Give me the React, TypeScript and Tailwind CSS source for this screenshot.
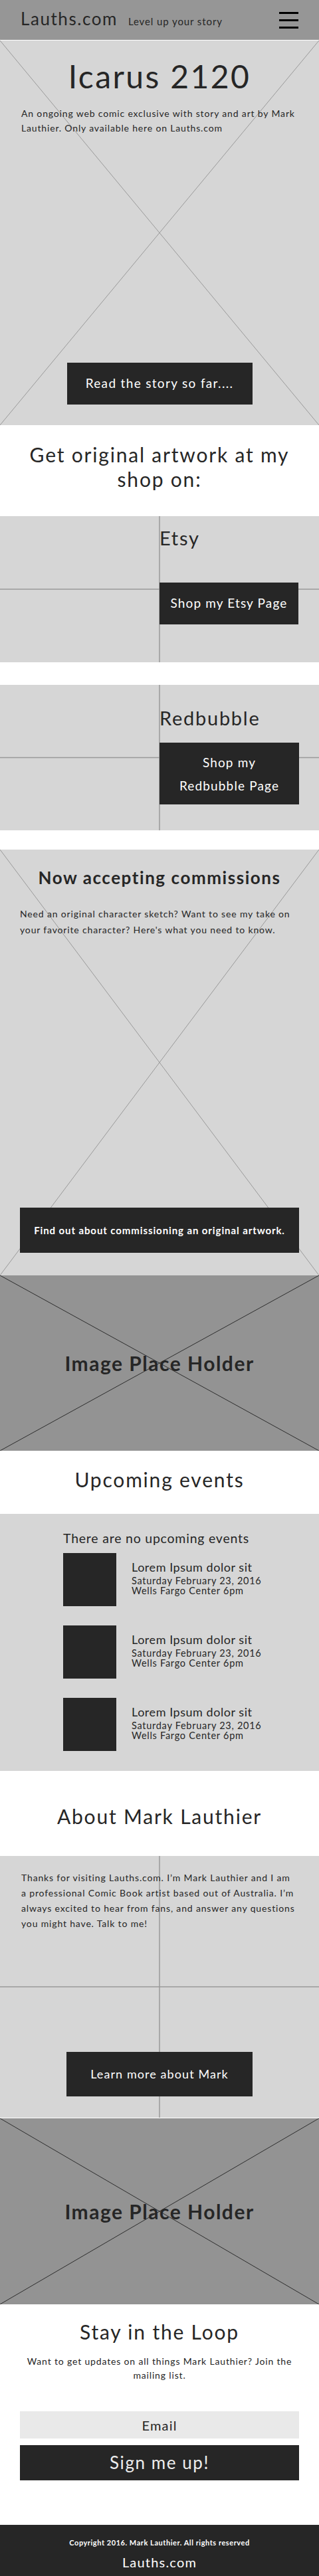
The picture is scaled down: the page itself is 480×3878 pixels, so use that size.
import React from "react";

function XLines({ color }: { color: string }) {
  return (
    <svg
      className="pointer-events-none absolute inset-0 h-full w-full"
      viewBox="0 0 100 100"
      preserveAspectRatio="none"
    >
      <line x1="0" y1="0" x2="100" y2="100" stroke={color} strokeWidth="1" vectorEffect="non-scaling-stroke" />
      <line x1="100" y1="0" x2="0" y2="100" stroke={color} strokeWidth="1" vectorEffect="non-scaling-stroke" />
    </svg>
  );
}

function PlusLines({ color }: { color: string }) {
  return (
    <svg
      className="pointer-events-none absolute inset-0 h-full w-full"
      viewBox="0 0 100 100"
      preserveAspectRatio="none"
    >
      <line x1="50" y1="0" x2="50" y2="100" stroke={color} strokeWidth="1.5" vectorEffect="non-scaling-stroke" />
      <line x1="0" y1="50" x2="100" y2="50" stroke={color} strokeWidth="1.5" vectorEffect="non-scaling-stroke" />
    </svg>
  );
}

function EventRow() {
  return (
    <div className="flex gap-[23px]">
      <div className="h-[80px] w-[80px] shrink-0 bg-[#262626]" />
      <div className="whitespace-nowrap pt-[12px] text-[#262626]">
        <div className="text-[18px] leading-none tracking-[0.03em]">Lorem Ipsum dolor sit</div>
        <div className="mt-[4px] text-[14.5px] leading-[15px] tracking-[0.05em]">
          Saturday February 23, 2016
          <br />
          Wells Fargo Center 6pm
        </div>
      </div>
    </div>
  );
}

function ImagePlaceholder({ h }: { h: string }) {
  return (
    <section className={`relative flex items-center justify-center bg-[#939393] ${h}`}>
      <XLines color="#2e2e2e" />
      <span className="relative text-[30px] font-bold leading-none tracking-[0.05em] text-[#262626]">
        Image Place Holder
      </span>
    </section>
  );
}

export default function App() {
  return (
    <div className="w-[480px] bg-white font-[Lato,'Open_Sans',sans-serif] text-[#262626]">
      {/* Header */}
      <header className="flex h-[60px] items-start justify-between bg-[#969696] pl-[31px] pr-[31px] pt-[15px]">
        <div className="flex items-baseline gap-[16px]">
          <span className="text-[26px] leading-none tracking-[0.06em] text-[#262626]">Lauths.com</span>
          <span className="text-[15px] leading-none tracking-[0.06em] text-[#262626]">Level up your story</span>
        </div>
        <div className="mt-[3px] flex flex-col gap-[8px]">
          <div className="h-[3px] w-[29px] bg-black" />
          <div className="h-[3px] w-[29px] bg-black" />
          <div className="h-[3px] w-[29px] bg-black" />
        </div>
      </header>

      {/* Hero */}
      <section className="relative mt-px flex h-[579px] flex-col items-center bg-[#d6d6d6] pb-[31px] pt-[30px]">
        <XLines color="#9a9a9a" />
        <h1 className="relative text-[48px] leading-none tracking-[0.05em] text-[#262626]">Icarus 2120</h1>
        <p className="relative mt-[21px] self-stretch px-[32px] text-[14px] leading-[22px] tracking-[0.06em]">
          An ongoing web comic exclusive with story and art by Mark Lauthier. Only available here on Lauths.com
        </p>
        <button className="relative mt-auto h-[63px] w-[279px] bg-[#262626] text-[19px] tracking-[0.07em] text-white">
          Read the story so far....
        </button>
      </section>

      {/* Shop heading */}
      <div className="px-[20px] pb-[37px] pt-[26px]">
        <h2 className="text-center text-[30px] leading-[37px] tracking-[0.06em]">
          Get original artwork at my
          <br />
          shop on:
        </h2>
      </div>

      {/* Etsy */}
      <section className="relative grid h-[220px] grid-cols-2 bg-[#d6d6d6]">
        <PlusLines color="#9a9a9a" />
        <div />
        <div className="relative pt-[18px]">
          <h3 className="text-[29px] leading-none tracking-[0.06em]">Etsy</h3>
          <button className="mt-[53px] h-[63px] w-[209px] bg-[#262626] text-[19px] tracking-[0.06em] text-white">
            Shop my Etsy Page
          </button>
        </div>
      </section>

      {/* Redbubble */}
      <section className="relative mt-[34px] grid h-[219px] grid-cols-2 bg-[#d6d6d6]">
        <PlusLines color="#9a9a9a" />
        <div />
        <div className="relative pt-[35px]">
          <h3 className="text-[29px] leading-none tracking-[0.06em]">Redbubble</h3>
          <button className="mt-[23px] h-[93px] w-[210px] bg-[#262626] text-[19px] leading-[35px] tracking-[0.06em] text-white">
            Shop my
            <br />
            Redbubble Page
          </button>
        </div>
      </section>

      {/* Commissions */}
      <section className="relative mt-[29px] flex h-[641px] flex-col items-center bg-[#d6d6d6] pb-[34px] pt-[29px]">
        <XLines color="#9a9a9a" />
        <h2 className="relative text-[26px] font-bold leading-none tracking-[0.06em]">Now accepting commissions</h2>
        <p className="relative mt-[30px] self-stretch px-[30px] text-[14px] leading-[24px] tracking-[0.06em]">
          Need an original character sketch? Want to see my take on your favorite character? Here's what you need to
          know.
        </p>
        <button className="relative mt-auto h-[68px] w-[420px] bg-[#262626] text-[15px] font-bold tracking-[0.06em] text-white">
          Find out about commissioning an original artwork.
        </button>
      </section>

      <ImagePlaceholder h="h-[264px]" />

      {/* Upcoming events */}
      <div className="pb-[37px] pt-[28px]">
        <h2 className="text-center text-[30px] leading-none tracking-[0.06em]">Upcoming events</h2>
      </div>

      <section className="h-[387px] bg-[#d6d6d6] pt-[27px]">
        <div className="mx-auto w-[290px]">
          <div className="whitespace-nowrap text-[19.5px] leading-none tracking-[0.04em]">
            There are no upcoming events
          </div>
          <div className="mt-[12px] flex flex-col gap-[29px]">
            <EventRow />
            <EventRow />
            <EventRow />
          </div>
        </div>
      </section>

      {/* About */}
      <div className="pb-[45px] pt-[53px]">
        <h2 className="text-center text-[30px] leading-none tracking-[0.06em]">About Mark Lauthier</h2>
      </div>

      <section className="relative flex h-[394px] flex-col items-center bg-[#d6d6d6] pb-[32px] pt-[21px]">
        <PlusLines color="#9a9a9a" />
        <p className="relative self-stretch px-[32px] text-[14px] leading-[23px] tracking-[0.06em]">
          Thanks for visiting Lauths.com. I’m Mark Lauthier and I am a professional Comic Book artist based out of
          Australia. I’m always excited to hear from fans, and answer any questions you might have. Talk to me!
        </p>
        <button className="relative mt-auto h-[67px] w-[280px] bg-[#262626] text-[18px] tracking-[0.06em] text-white">
          Learn more about Mark
        </button>
      </section>

      <div className="mt-px">
        <ImagePlaceholder h="h-[280px]" />
      </div>

      {/* Stay in the loop */}
      <section className="flex h-[332px] flex-col pt-[26px]">
        <h2 className="text-center text-[30px] leading-none tracking-[0.06em]">Stay in the Loop</h2>
        <p className="mt-[19px] px-[36px] text-center text-[14px] leading-[21px] tracking-[0.06em]">
          Want to get updates on all things Mark Lauthier? Join the mailing list.
        </p>
        <div className="mx-[30px] mt-[44px] flex h-[41px] items-center justify-center bg-[#e9e9e9] text-[20px] tracking-[0.06em]">
          Email
        </div>
        <button className="mx-[30px] mt-[10px] h-[53px] bg-[#262626] text-[26px] tracking-[0.06em] text-[#eeeeee]">
          Sign me up!
        </button>
      </section>

      {/* Footer */}
      <footer className="flex h-[79px] flex-col items-center bg-[#262626] pt-[21px] text-white">
        <div className="text-[11px] font-bold leading-none tracking-[0.05em]">
          Copyright 2016. Mark Lauthier. All rights reserved
        </div>
        <div className="mt-[14px] text-[20px] leading-none tracking-[0.06em]">Lauths.com</div>
      </footer>
    </div>
  );
}
